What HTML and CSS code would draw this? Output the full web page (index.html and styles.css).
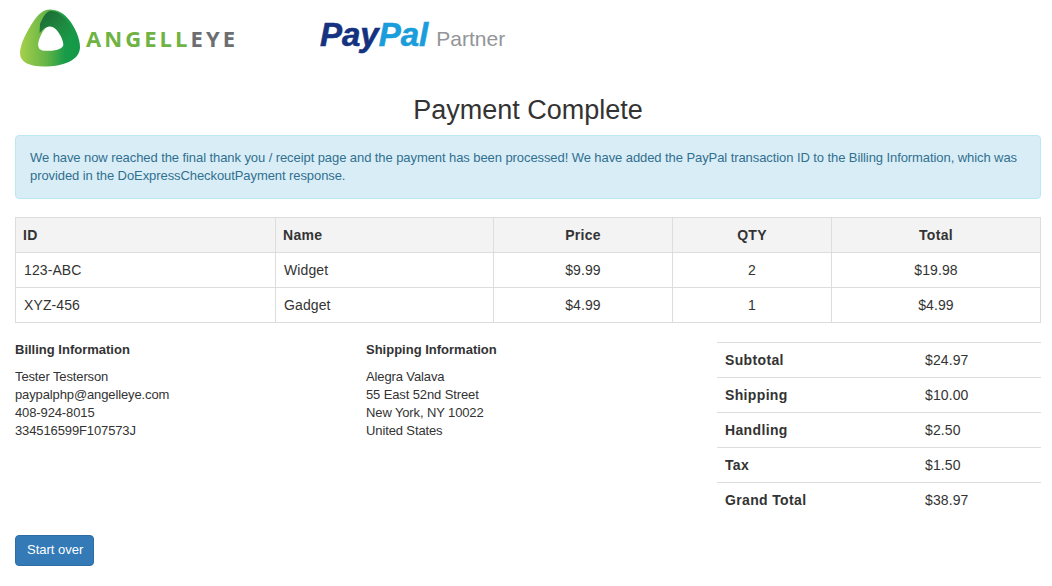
FILE: index.html
```html
<!DOCTYPE html>
<html lang="en">
<head>
  <meta charset="utf-8">
  <title>Payment Complete</title>
  <link rel="stylesheet" href="styles.css">
</head>
<body>
  <!-- Logos -->
  <div class="logos">
    <svg class="logo-angelleye" width="230" height="72" viewBox="15 0 230 72">
      <defs>
        <linearGradient id="ringGreen" x1="0" x2="1" y1="0" y2="0">
          <stop offset="0" stop-color="#a6d04c"/>
          <stop offset="0.45" stop-color="#62b346"/>
          <stop offset="0.75" stop-color="#189c49"/>
          <stop offset="1" stop-color="#139848"/>
        </linearGradient>
        <linearGradient id="ringDark" x1="0.2" x2="0.9" y1="0.1" y2="0.9">
          <stop offset="0" stop-color="#1c6f36"/>
          <stop offset="0.55" stop-color="#1f8a40"/>
          <stop offset="1" stop-color="#169a48"/>
        </linearGradient>
      </defs>
      <path d="M50 9.5C44 9.5 38 14 33 22C27 31 20 44 20 53C20 62 29 66.500 44 66.500C62 66.500 80 61 80 47C80 38 75 28 70 21C64 13 57 9.500 50 9.500Z" fill="url(#ringGreen)"/>
      <path d="M50 11C46 12 43 17 40 24L39.500 33L44 28.500C50 25 54 27 57 31C60 35 63 41 64 45L70 40L73 34C71 26 64 14 55 11.500C53 11 52 10.800 50 11Z" fill="url(#ringDark)"/>
      <path d="M49.500 26.500C46 26.500 43.500 30 41 35C39 39 37.500 44 38.500 47C39.500 50.500 43 51 50 50.800C56 50.600 62.500 49 63.300 45C63.600 41 60 34 57 30.500C55 28 52 26.500 49.500 26.500Z" fill="#fff"/>
      <text class="logo-word" x="86" y="46.500" textLength="149" lengthAdjust="spacing"><tspan fill="#6fb344">ANGELL</tspan><tspan fill="#6d6e71">EYE</tspan></text>
    </svg>
    <div class="logo-paypal">
      <span class="pp-pay">Pay</span><span class="pp-pal">Pal</span><span class="pp-partner">Partner</span>
    </div>
  </div>

  <h2 class="page-title">Payment Complete</h2>

  <div class="alert">
    We have now reached the final thank you / receipt page and the payment has been processed! We have added the PayPal transaction ID to the Billing Information, which was provided in the DoExpressCheckoutPayment response.
  </div>

  <!-- Order items -->
  <table class="items">
    <thead>
      <tr>
        <th class="col-id">ID</th>
        <th class="col-name">Name</th>
        <th class="col-price center">Price</th>
        <th class="col-qty center">QTY</th>
        <th class="center">Total</th>
      </tr>
    </thead>
    <tbody>
      <tr>
        <td>123-ABC</td>
        <td>Widget</td>
        <td class="center">$9.99</td>
        <td class="center">2</td>
        <td class="center">$19.98</td>
      </tr>
      <tr>
        <td>XYZ-456</td>
        <td>Gadget</td>
        <td class="center">$4.99</td>
        <td class="center">1</td>
        <td class="center">$4.99</td>
      </tr>
    </tbody>
  </table>

  <div class="summary">
    <div class="address">
      <h5>Billing Information</h5>
      <p>Tester Testerson<br>paypalphp@angelleye.com<br>408-924-8015<br>334516599F107573J</p>
    </div>
    <div class="address">
      <h5>Shipping Information</h5>
      <p>Alegra Valava<br>55 East 52nd Street<br>New York, NY 10022<br>United States</p>
    </div>
    <table class="totals">
      <tr><th>Subtotal</th><td>$24.97</td></tr>
      <tr><th>Shipping</th><td>$10.00</td></tr>
      <tr><th>Handling</th><td>$2.50</td></tr>
      <tr><th>Tax</th><td>$1.50</td></tr>
      <tr><th>Grand Total</th><td>$38.97</td></tr>
    </table>
  </div>

  <a class="btn" href="#">Start over</a>
</body>
</html>
```

FILE: styles.css
```css
* {
  box-sizing: border-box;
}

body {
  margin: 0;
  padding: 0 11px 0 15px;
  font-family: "Liberation Sans", Arial, sans-serif;
  font-size: 14px;
  line-height: 18px;
  color: #333;
  background-color: #fff;
}

.logos {
  display: flex;
  align-items: flex-start;
  height: 72px;
}

.logo-angelleye {
  display: block;
}

.logo-word {
  font-family: "Open Sans", sans-serif;
  font-size: 22px;
  font-weight: 700;
}

.logo-paypal {
  display: flex;
  align-items: baseline;
  margin-left: 75px;
  padding-top: 15px;
  line-height: 40px;
}

.pp-pay,
.pp-pal {
  font-size: 33px;
  font-weight: bold;
  font-style: italic;
  -webkit-text-stroke: 0.6px;
}

.pp-pay {
  color: #14327f;
}

.pp-pal {
  color: #1a9ddb;
}

.pp-partner {
  margin-left: 8px;
  font-size: 21px;
  color: #939598;
}

.page-title {
  margin: 22px 0 8px;
  font-size: 27px;
  font-weight: normal;
  line-height: 33px;
  text-align: center;
}

.alert {
  height: 64px;
  margin-bottom: 18px;
  padding: 13px 14px;
  font-size: 13px;
  letter-spacing: -0.08px;
  color: #31708f;
  background-color: #d9edf7;
  border: 1px solid #bce8f1;
  border-radius: 4px;
}

table {
  border-collapse: collapse;
}

.items {
  width: 100%;
  table-layout: fixed;
  margin-bottom: 19px;
}

.items th,
.items td {
  height: 35px;
  padding: 0 8px;
  text-align: left;
  letter-spacing: 0.1px;
  border: 1px solid #ddd;
}

.items th {
  padding-left: 7px;
  letter-spacing: 0.3px;
  background-color: #f3f3f3;
}

.items .center {
  padding-left: 8px;
  text-align: center;
}

.col-id {
  width: 260px;
}

.col-name {
  width: 218px;
}

.col-price {
  width: 179px;
}

.col-qty {
  width: 159px;
}

.summary {
  display: flex;
  align-items: flex-start;
}

.address {
  width: 351px;
  font-size: 13px;
  letter-spacing: -0.12px;
}

.address h5 {
  margin: 0 0 10px;
  font-size: 13px;
  line-height: 16px;
  font-weight: bold;
  letter-spacing: 0;
}

.address p {
  margin: 0;
}

.totals {
  width: 324px;
  margin-bottom: 17px;
}

.totals th,
.totals td {
  height: 35px;
  padding: 0 8px;
  text-align: left;
  letter-spacing: 0.1px;
  border-top: 1px solid #ddd;
}

.totals th {
  width: 200px;
  letter-spacing: 0.35px;
}

.btn {
  display: inline-block;
  padding: 4px 10px 6px 11px;
  font-size: 13px;
  color: #fff;
  line-height: 19px;
  text-decoration: none;
  background-color: #337ab7;
  border: 1px solid #2e6da4;
  border-radius: 4px;
}
```
